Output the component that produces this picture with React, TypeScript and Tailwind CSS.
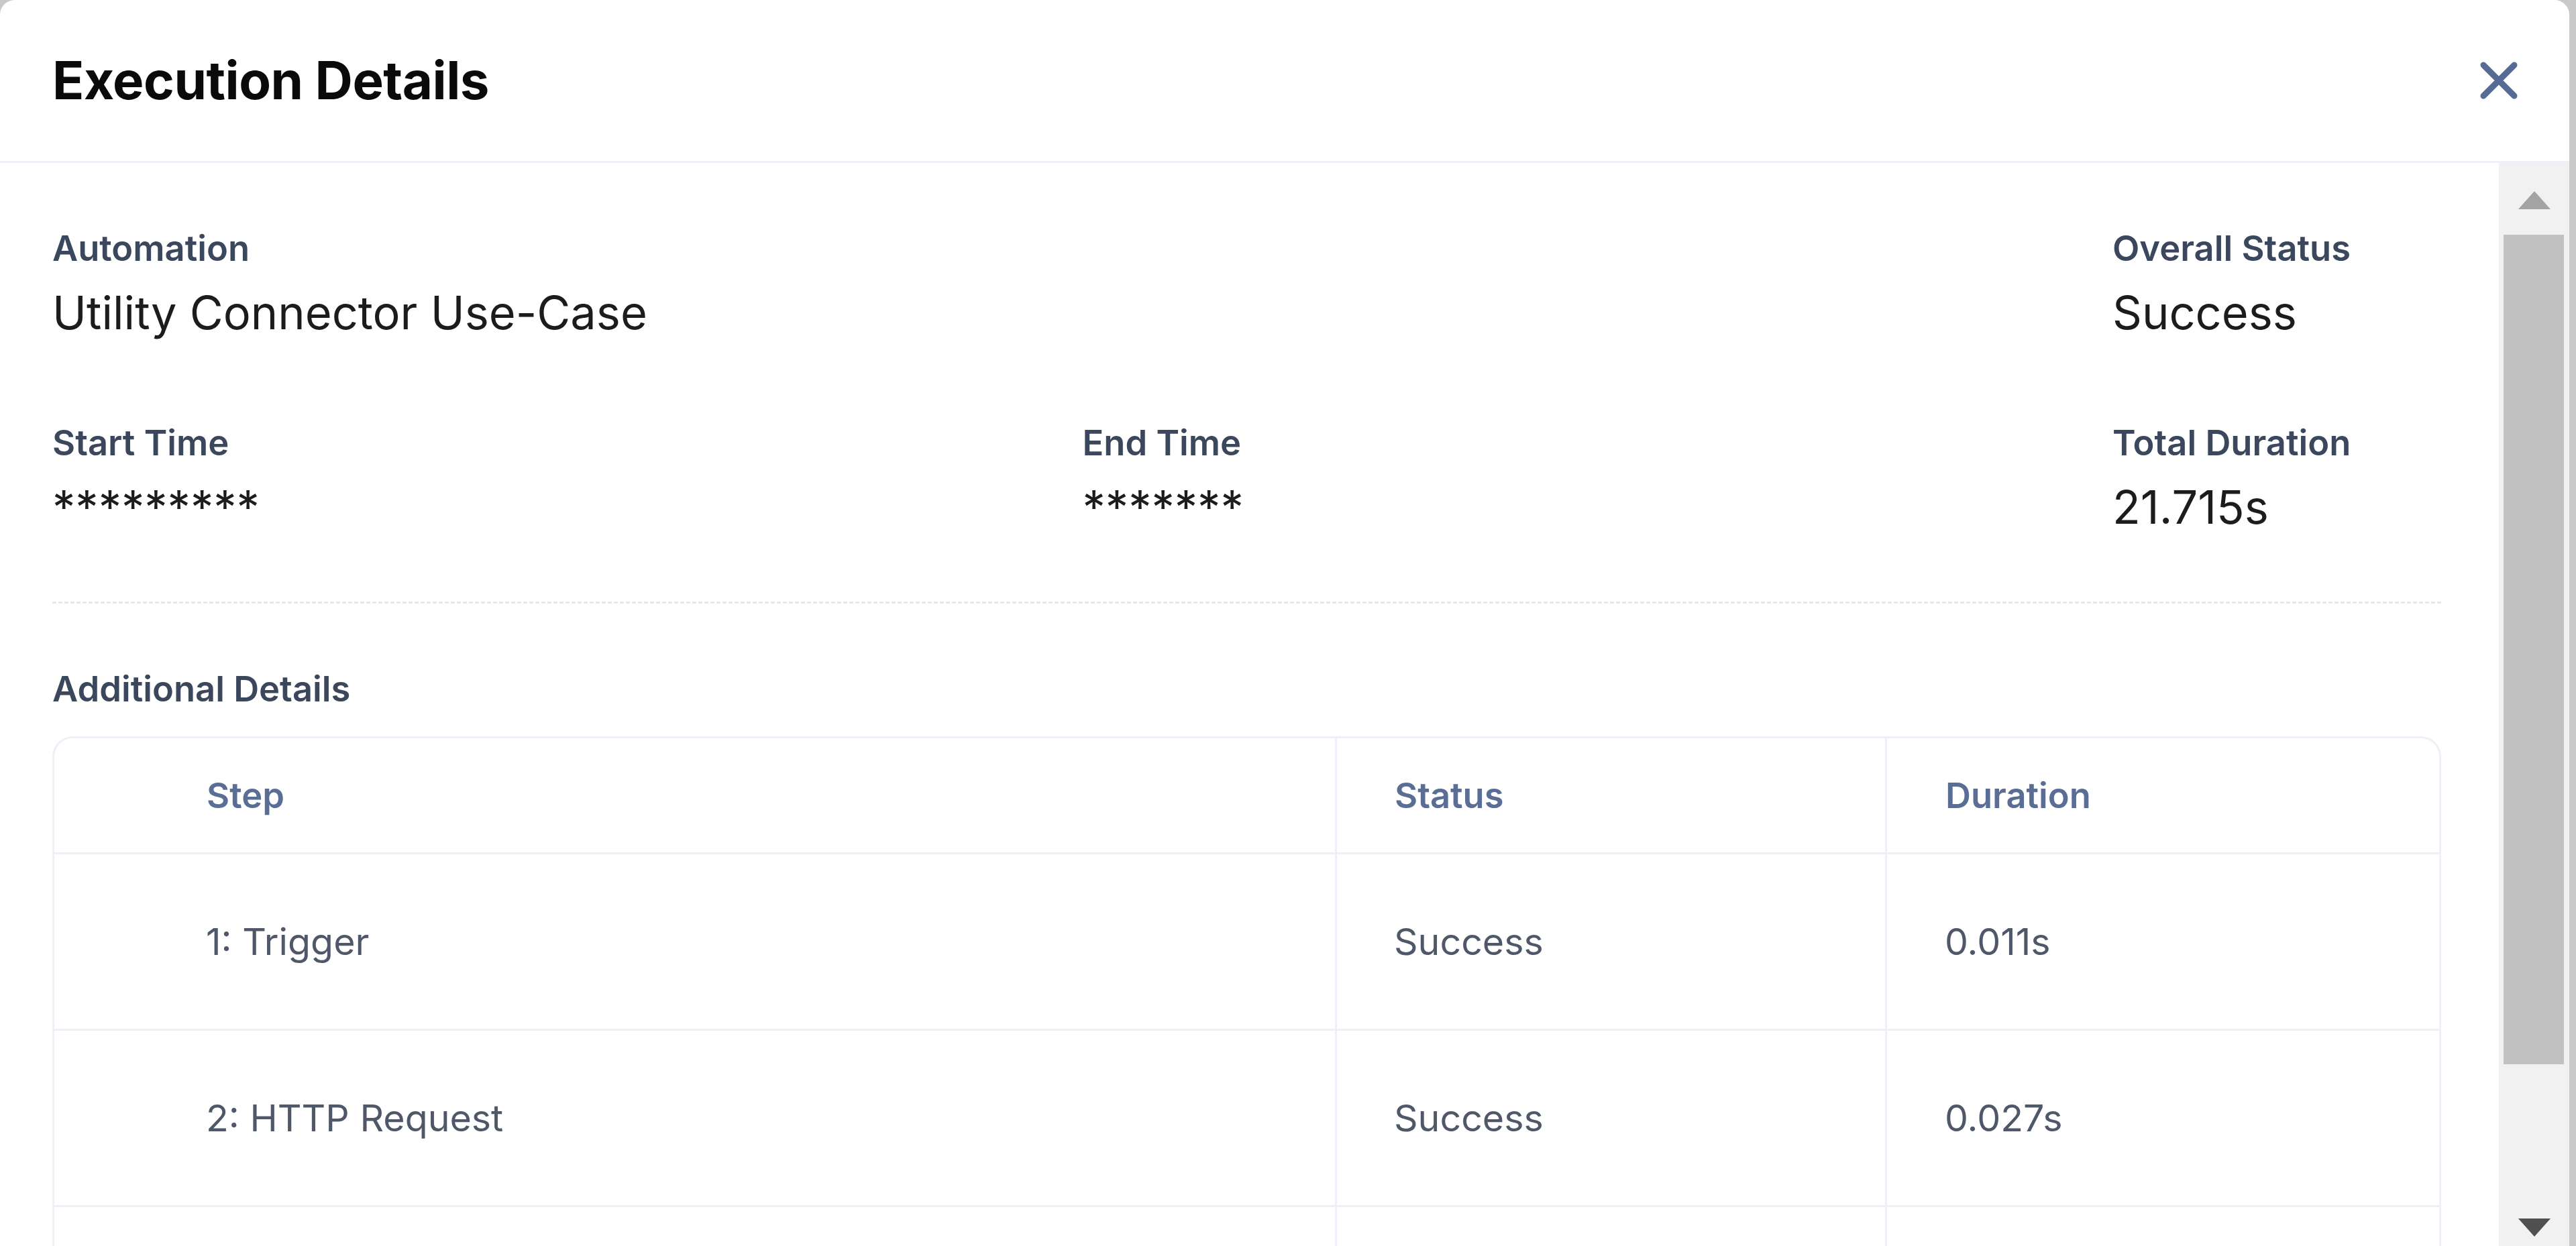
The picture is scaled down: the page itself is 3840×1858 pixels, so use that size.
import React from "react";

const steps = [
  { name: "1: Trigger", status: "Success", duration: "0.011s" },
  { name: "2: HTTP Request", status: "Success", duration: "0.027s" },
  // third row is scrolled below the fold
  { name: "", status: "", duration: "" },
];

function Field({ label, value, className = "" }: { label: string; value: string; className?: string }) {
  return (
    <div className={className}>
      <div className="text-[52.5px] leading-[66px] font-semibold text-[#3b475c]">{label}</div>
      <div className="mt-[22px] text-[68.5px] leading-[84px] text-[#1c1c1c]">{value}</div>
    </div>
  );
}

function CloseIcon() {
  return (
    <svg width="58" height="58" viewBox="0 0 58 58" fill="none">
      <path d="M6 6L52 52M52 6L6 52" stroke="#566a96" strokeWidth="9" strokeLinecap="round" />
    </svg>
  );
}

export default function App() {
  return (
    <div className="flex h-[1858px] w-full overflow-hidden bg-[#c9c9c9] font-['Inter',sans-serif]">
      <div className="flex h-full w-[3830px] flex-col overflow-hidden rounded-t-[22px] bg-white">
        {/* header */}
        <div className="flex h-[243px] shrink-0 items-center justify-between border-b-[3px] border-[#edf0f6] pl-[78px] pr-[76px]">
          <h2 className="text-[78px] font-bold leading-none tracking-[-0.5px] text-[#0a0a0a]">Execution Details</h2>
          <CloseIcon />
        </div>

        <div className="flex min-h-0 flex-1">
          {/* scroll content */}
          <div className="min-w-0 flex-1 pl-[78px] pr-[86px] pt-[94px]">
            <div className="flex justify-between">
              <Field label="Automation" value="Utility Connector Use-Case" />
              <Field label="Overall Status" value="Success" className="w-[490px]" />
            </div>

            <div className="mt-[118px] flex justify-between">
              <Field label="Start Time" value="*********" className="w-[490px]" />
              <Field label="End Time" value="*******" className="w-[490px]" />
              <Field label="Total Duration" value="21.715s" className="w-[490px]" />
            </div>

            <div className="mt-[98px] border-t-[3px] border-dashed border-[#e3e7ef]" />

            <div className="mt-[94px] text-[52.5px] leading-[66px] font-semibold text-[#3b475c]">Additional Details</div>

            <div className="mt-[38px] overflow-hidden rounded-t-[30px] border-[3px] border-b-0 border-[#edf0f6]">
              <div className="grid h-[173px] grid-cols-[1fr_820px_826px] border-b-[3px] border-[#edf0f6] text-[52.5px] font-semibold text-[#5a6d95]">
                <div className="flex items-center pl-[227px]">Step</div>
                <div className="flex items-center border-l-[3px] border-[#edf0f6] pl-[86px]">Status</div>
                <div className="flex items-center border-l-[3px] border-[#edf0f6] pl-[87px]">Duration</div>
              </div>
              {steps.map((s, i) => (
                <div
                  key={i}
                  className="grid h-[263px] grid-cols-[1fr_820px_826px] border-b-[3px] border-[#edf0f6] text-[55.5px] text-[#4f5869]"
                >
                  <div className="flex items-center pl-[226px]">{s.name}</div>
                  <div className="flex items-center border-l-[3px] border-[#edf0f6] pl-[85px]">{s.status}</div>
                  <div className="flex items-center border-l-[3px] border-[#edf0f6] pl-[86px]">{s.duration}</div>
                </div>
              ))}
            </div>
          </div>

          {/* scrollbar */}
          <div className="flex w-[105px] shrink-0 flex-col items-center bg-[#f1f1f1]">
            <div className="mt-[42px] h-0 w-0 border-x-[24px] border-b-[27px] border-x-transparent border-b-[#a3a3a3]" />
            <div className="ml-[-2px] mt-[38px] h-[1237px] w-[90px] bg-[#c1c1c1]" />
            <div className="mt-auto mb-[14px] h-0 w-0 border-x-[24px] border-t-[27px] border-x-transparent border-t-[#505050]" />
          </div>
        </div>
      </div>
    </div>
  );
}
